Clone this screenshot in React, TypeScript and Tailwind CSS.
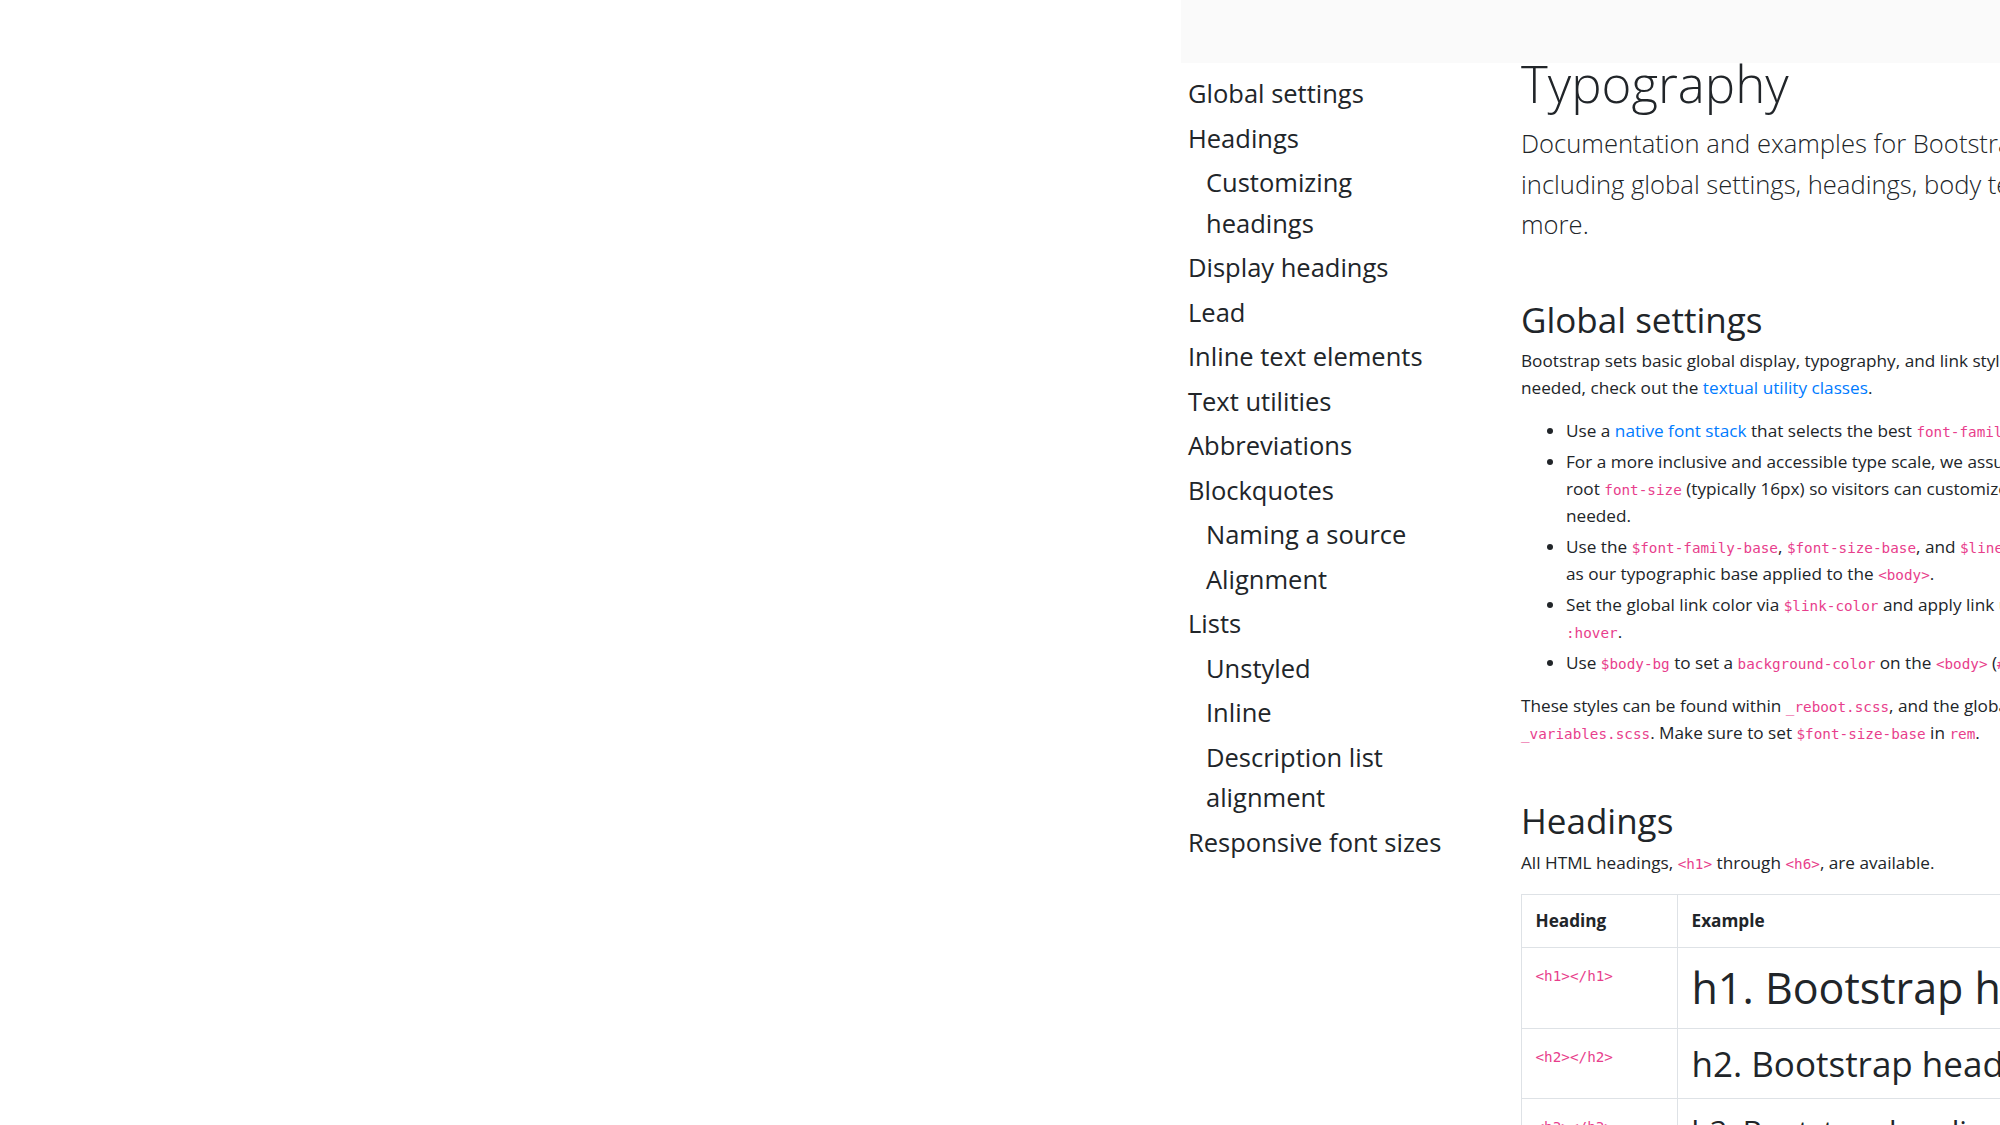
import React from "react";

type TocItem = { label: string; children?: string[] };

const toc: TocItem[] = [
  { label: "Global settings" },
  { label: "Headings", children: ["Customizing headings"] },
  { label: "Display headings" },
  { label: "Lead" },
  { label: "Inline text elements" },
  { label: "Text utilities" },
  { label: "Abbreviations" },
  { label: "Blockquotes", children: ["Naming a source", "Alignment"] },
  { label: "Lists", children: ["Unstyled", "Inline", "Description list alignment"] },
  { label: "Responsive font sizes" },
];

const headingRows = [
  { tag: "<h1></h1>", text: "h1. Bootstrap heading", cls: "text-[43px] leading-[54px]" },
  { tag: "<h2></h2>", text: "h2. Bootstrap heading", cls: "text-[35px] leading-[43px]" },
  { tag: "<h3></h3>", text: "h3. Bootstrap heading", cls: "text-[30px] leading-[38px]" },
  { tag: "<h4></h4>", text: "h4. Bootstrap heading", cls: "text-[26px] leading-[32px]" },
];

function Code({ children }: { children: React.ReactNode }) {
  return (
    <code className="font-['DejaVu_Sans_Mono',monospace] text-[14.3px] leading-none text-[#e83e8c]">
      {children}
    </code>
  );
}

function Link({ children }: { children: React.ReactNode }) {
  return <a className="text-[#007bff]">{children}</a>;
}

function Sidebar() {
  return (
    <nav className="w-[340px] shrink-0 pt-[8px] pl-[7px]">
      <ul className="w-[262px] text-[25.5px] leading-[40.5px] text-[#212529]">
        {toc.map((item) => (
          <li key={item.label}>
            <div className="py-[2px]">{item.label}</div>
            {item.children && (
              <ul className="pl-[18px]">
                {item.children.map((c) => (
                  <li key={c} className="py-[2px]">
                    {c}
                  </li>
                ))}
              </ul>
            )}
          </li>
        ))}
      </ul>
    </nav>
  );
}

function Content() {
  return (
    <main className="w-[1000px] shrink-0 text-[17.2px] leading-[27px] text-[#212529]">
      <h1 className="-mt-[11px] text-[51px] font-light leading-[62px]">Typography</h1>
      <p className="mt-[10px] text-[25.6px] font-light leading-[40.5px]">
        Documentation and examples for Bootstrap typography,
        <br />
        including global settings, headings, body text, lists, and
        <br />
        more.
      </p>

      <h2 className="mt-[52px] text-[35px] font-medium leading-[43px]">Global settings</h2>
      <p className="mt-[6px]">
        Bootstrap sets basic global display, typography, and link styles. When more control is
        <br />
        needed, check out the <Link>textual utility classes</Link>.
      </p>
      <ul className="mt-[16px] list-disc pl-[45px]">
        <li>
          Use a <Link>native font stack</Link> that selects the best <Code>font-family</Code> for each OS and
          device.
        </li>
        <li className="mt-[4px]">
          For a more inclusive and accessible type scale, we assume the browser default
          <br />
          root <Code>font-size</Code> (typically 16px) so visitors can customize their browser defaults as
          <br />
          needed.
        </li>
        <li className="mt-[4px]">
          Use the <Code>$font-family-base</Code>, <Code>$font-size-base</Code>, and{" "}
          <Code>$line-height-base</Code> attributes
          <br />
          as our typographic base applied to the <Code>&lt;body&gt;</Code>.
        </li>
        <li className="mt-[4px]">
          Set the global link color via <Code>$link-color</Code> and apply link underlines only on
          <br />
          <Code>:hover</Code>.
        </li>
        <li className="mt-[4px]">
          Use <Code>$body-bg</Code> to set a <Code>background-color</Code> on the <Code>&lt;body&gt;</Code>{" "}
          (<Code>#fff</Code> by default).
        </li>
      </ul>
      <p className="mt-[16px]">
        These styles can be found within <Code>_reboot.scss</Code>, and the global variables are defined in
        <br />
        <Code>_variables.scss</Code>. Make sure to set <Code>$font-size-base</Code> in <Code>rem</Code>.
      </p>

      <h2 className="mt-[53px] text-[35px] font-medium leading-[43px]">Headings</h2>
      <p className="mt-[7px]">
        All HTML headings, <Code>&lt;h1&gt;</Code> through <Code>&lt;h6&gt;</Code>, are available.
      </p>
      <table className="mt-[18px] w-[900px] border-collapse border border-[#dee2e6]">
        <thead>
          <tr>
            <th className="w-[156px] border border-[#dee2e6] px-[13.5px] py-[12.5px] text-left font-bold">
              Heading
            </th>
            <th className="border border-[#dee2e6] px-[13.5px] py-[12.5px] text-left font-bold">Example</th>
          </tr>
        </thead>
        <tbody>
          {headingRows.map((r) => (
            <tr key={r.tag}>
              <td className="border border-[#dee2e6] px-[13.5px] py-[13px] align-top">
                <Code>{r.tag}</Code>
              </td>
              <td className="border border-[#dee2e6] px-[13.5px] py-[13px] align-top">
                <div className={`${r.cls} whitespace-nowrap font-medium`}>{r.text}</div>
              </td>
            </tr>
          ))}
        </tbody>
      </table>
    </main>
  );
}

export default function App() {
  return (
    <div className="flex h-[1125px] w-[2000px] overflow-hidden bg-white font-['Open_Sans',sans-serif]">
      <div className="w-[1181px] shrink-0" />
      <div className="flex min-w-0 flex-1 flex-col">
        <div className="h-[63px] shrink-0 bg-[#fafafa]" />
        <div className="flex">
          <Sidebar />
          <Content />
        </div>
      </div>
    </div>
  );
}
